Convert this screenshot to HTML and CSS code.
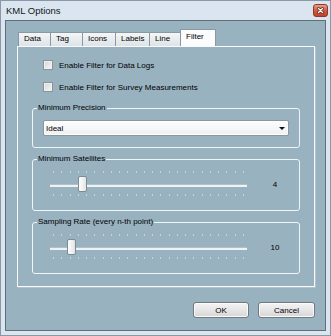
FILE: index.html
```html
<!DOCTYPE html>
<html lang="en">

<head>
    <meta charset="UTF-8">
    <meta name="viewport" content="width=device-width, initial-scale=1.0">
    <title>KML Options</title>
    <link rel="stylesheet" href="styles.css">
</head>

<body>

    <div class="window">
        <div class="titlebar">
            <span class="title">KML Options</span>
            <button class="close" title="Close">
                <svg width="13" height="11" viewBox="0 0 13 11">
                    <path d="M4.5 3.5 L8.5 7.5 M8.5 3.5 L4.5 7.5" stroke="#5a1f16" stroke-width="2.6" stroke-linecap="round" />
                    <path d="M4.5 3.5 L8.5 7.5 M8.5 3.5 L4.5 7.5" stroke="#ffffff" stroke-width="1.4" stroke-linecap="round" />
                </svg>
            </button>
        </div>

        <div class="client">
            <div class="tabs">
                <div class="tab tab-data">Data</div>
                <div class="tab tab-tag">Tag</div>
                <div class="tab tab-icons">Icons</div>
                <div class="tab tab-labels">Labels</div>
                <div class="tab tab-line">Line</div>
                <div class="tab tab-filter active">Filter</div>
            </div>

            <div class="panel">
                <label class="check check-first"><span class="box"></span>Enable Filter for Data Logs</label>
                <label class="check"><span class="box"></span>Enable Filter for Survey Measurements</label>

                <fieldset class="group group-first">
                    <legend>Minimum Precision</legend>
                    <div class="combo">
                        <span>Ideal</span>
                        <span class="arrow"></span>
                    </div>
                </fieldset>

                <fieldset class="group">
                    <legend>Minimum Satellites</legend>
                    <div class="slider-row">
                        <div class="slider">
                            <div class="track"></div>
                            <div class="thumb" style="left: 28px;"></div>
                        </div>
                        <span class="value">4</span>
                    </div>
                </fieldset>

                <fieldset class="group">
                    <legend>Sampling Rate (every n-th point)</legend>
                    <div class="slider-row">
                        <div class="slider">
                            <div class="track"></div>
                            <div class="thumb" style="left: 17px;"></div>
                        </div>
                        <span class="value">10</span>
                    </div>
                </fieldset>
            </div>

            <div class="buttons">
                <button class="btn btn-ok">OK</button>
                <button class="btn btn-cancel">Cancel</button>
            </div>
        </div>
    </div>

</body>

</html>
```

FILE: styles.css
```css
body {
    margin: 0;
    background: #ffffff;
}

.window {
    width: 331px;
    height: 336px;
    box-sizing: border-box;
    border: 1px solid #8a98a5;
    background: #dae5ef;
    display: flex;
    flex-direction: column;
    font-family: "Liberation Sans", Arial, sans-serif;
    font-size: 8px;
    color: #000000;
}

.titlebar {
    height: 19px;
    flex: none;
    display: flex;
    align-items: center;
    justify-content: space-between;
    padding: 0 2px 0 5px;
}

.title {
    font-size: 9.5px;
    color: #111820;
}

.close {
    width: 15px;
    height: 13px;
    padding: 0;
    border: 1px solid #8b3a2d;
    border-radius: 3px;
    background: linear-gradient(#e8a08c, #d05a40 50%, #c04228);
    display: flex;
    align-items: center;
    justify-content: center;
}

.client {
    flex: 1;
    margin: 0 4px 4px;
    border: 1px solid #5f6f7b;
    background: #98b2c0;
    display: flex;
    flex-direction: column;
    padding: 8px 10px 0 11px;
}

/* tabs */

.tabs {
    display: flex;
    align-items: flex-end;
    height: 17px;
    padding-left: 1px;
}

.tab {
    box-sizing: border-box;
    height: 14px;
    line-height: 12px;
    padding-left: 5px;
    border: 1px solid #8c98a1;
    border-bottom: none;
    margin-right: -1px;
    background: linear-gradient(#f4f6f7, #dde3e7);
    white-space: nowrap;
}

.tab-data { width: 33px; }
.tab-tag { width: 33px; }
.tab-icons { width: 34px; }
.tab-labels { width: 35px; }
.tab-line { width: 32px; }

.tab.active {
    width: 36px;
    height: 17px;
    padding-top: 1px;
    background: #fbfcfd;
    position: relative;
    z-index: 1;
}

.panel {
    border: 1px solid #f7f9fa;
    box-shadow: 1px 1px 0 #b3c2cb;
    padding: 0 14px 12px;
    display: flex;
    flex-direction: column;
}

/* checkboxes */

.check {
    display: flex;
    align-items: center;
    height: 12px;
    margin-left: 11px;
    margin-top: 10px;
}

.check-first {
    margin-top: 12px;
}

.box {
    width: 10px;
    height: 10px;
    box-sizing: border-box;
    border: 1px solid #8e9396;
    background: linear-gradient(135deg, #d3d7da, #f6f7f7);
    box-shadow: inset 0 0 0 1px #eceeef;
    margin-right: 6px;
}

/* group boxes */

.group {
    margin: 6px 0 0;
    padding: 0;
    border: 1px solid #eff4f7;
    border-radius: 3px;
    min-inline-size: 0;
}

.group-first {
    margin-top: 10px;
}

.group legend {
    margin-left: 4px;
    padding: 0 1px;
    line-height: 10px;
}

.combo {
    box-sizing: border-box;
    width: 246px;
    height: 16px;
    margin: 7px 0 11px 10px;
    padding: 0 3px 0 2px;
    border: 1px solid #8a979f;
    border-radius: 2px;
    background: linear-gradient(#fdfdfd, #eef0f1);
    box-shadow: inset 0 0 0 1px #ffffff;
    display: flex;
    align-items: center;
    justify-content: space-between;
}

.arrow {
    width: 0;
    height: 0;
    border-left: 3px solid transparent;
    border-right: 3px solid transparent;
    border-top: 3px solid #111111;
}

/* sliders */

.slider-row {
    display: flex;
    align-items: center;
    margin: 7px 0 13px 17px;
}

.slider {
    position: relative;
    width: 197px;
    height: 26px;
    background:
        repeating-linear-gradient(to right, #c6d3db 0 1px, transparent 1px 8.26px) 3px 0 / 191px 2px no-repeat,
        repeating-linear-gradient(to right, #c6d3db 0 1px, transparent 1px 8.26px) 3px 23px / 191px 2px no-repeat;
}

.track {
    position: absolute;
    left: 0;
    right: 0;
    top: 13px;
    height: 3px;
    background: #eef2f4;
    box-shadow: inset 0 1px 0 #b4c0c7;
}

.thumb {
    position: absolute;
    top: 5px;
    width: 9px;
    height: 16px;
    box-sizing: border-box;
    border: 1px solid #7e8b93;
    border-radius: 2px;
    background: linear-gradient(to right, #fdfdfd, #e1e4e6);
}

.value {
    width: 20px;
    margin-left: 18px;
    text-align: center;
}

/* buttons */

.buttons {
    display: flex;
    justify-content: flex-end;
    gap: 9px;
    margin-top: 15px;
}

.btn {
    height: 16px;
    padding: 0;
    font-family: inherit;
    font-size: 8px;
    color: #000000;
    border: 1px solid #6f7a80;
    border-radius: 3px;
    background: linear-gradient(#f4f4f4, #e6e6e6 50%, #d6d6d6);
    box-shadow: inset 0 0 0 1px #fbfbfb;
}

.btn-ok { width: 56px; }
.btn-cancel { width: 57px; }
```
